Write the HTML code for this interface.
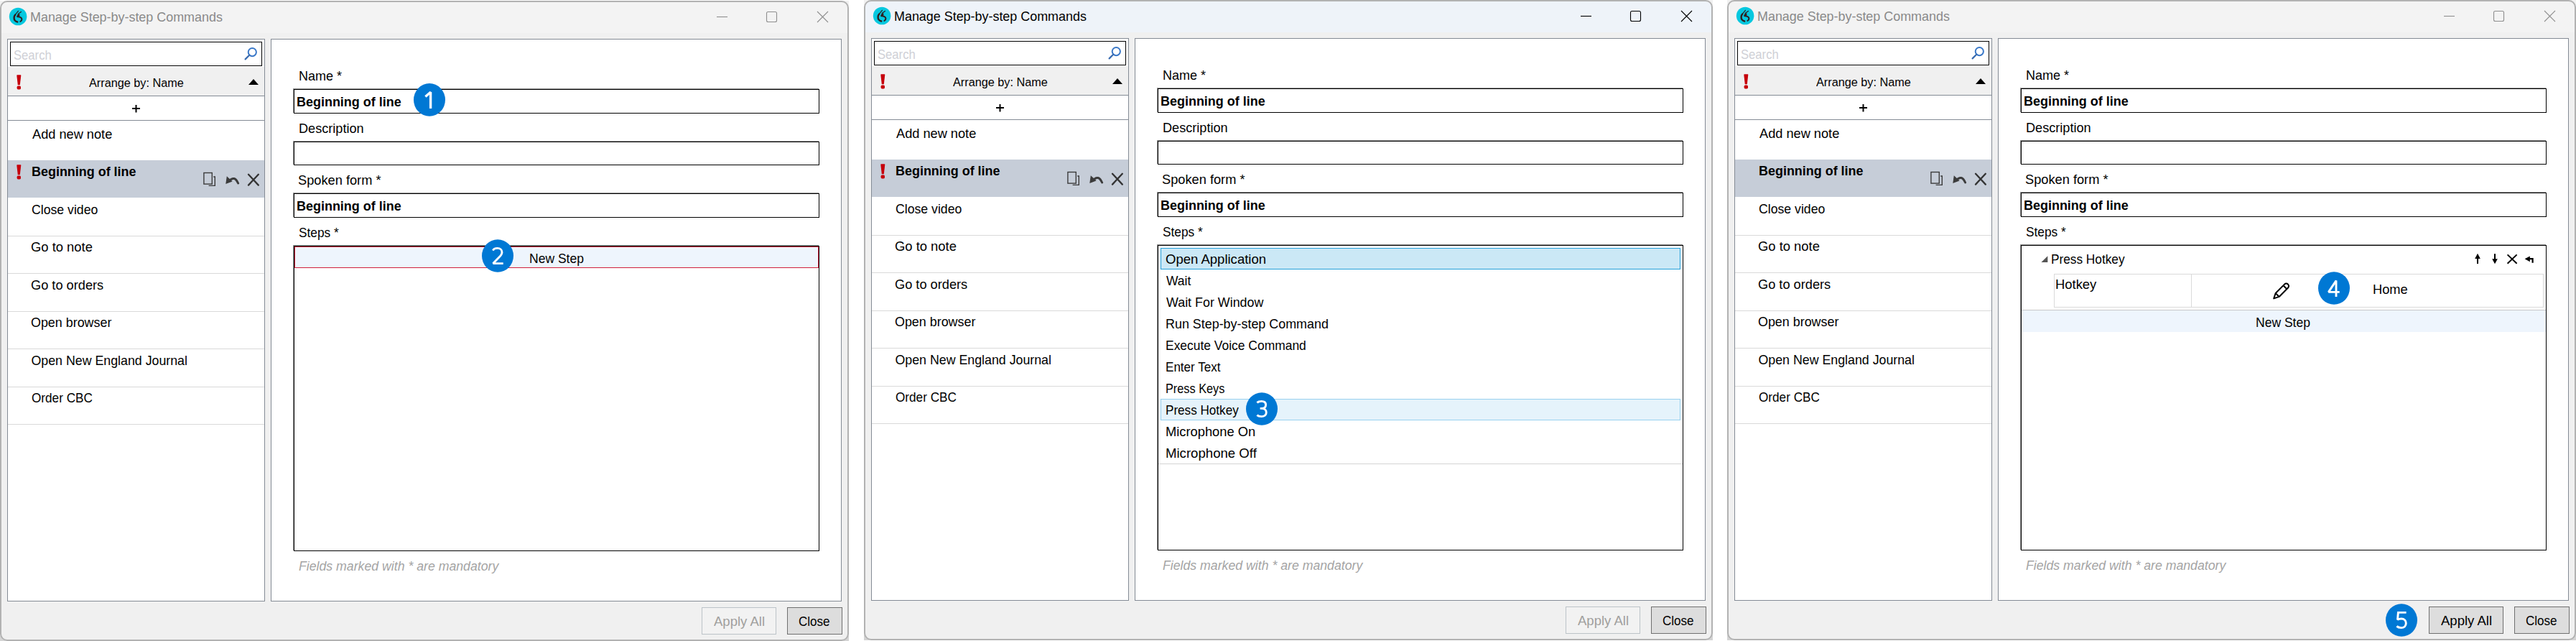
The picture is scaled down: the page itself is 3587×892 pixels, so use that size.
<!DOCTYPE html><html><head><meta charset="utf-8"><style>
html,body{margin:0;padding:0;background:#fff;width:3587px;height:892px;overflow:hidden;position:relative;}
.win{position:absolute;width:1182px;height:891px;}
.wbg{position:absolute;left:0;top:0;width:1182px;height:891px;background:#f0f0f0;border-radius:10px;}
.wb{position:absolute;left:0;top:0;width:1182px;height:891px;box-sizing:border-box;border:2px solid #b2b2b2;border-radius:10px;}
.r{position:absolute;box-sizing:border-box;}
svg.r{overflow:visible;}
.t{position:absolute;white-space:nowrap;font-family:"Liberation Sans",sans-serif;line-height:20px;transform-origin:0 0;}
</style></head><body>
<div class="win" style="left:0px;top:1px;">
<div class="r" style="left:0px;top:880px;width:12px;height:11px;background:#d4d4d4;"></div>
<div class="r" style="left:1170px;top:880px;width:12px;height:11px;background:#d4d4d4;"></div>
<div class="r" style="left:0px;top:0px;width:12px;height:12px;background:#f1f1f1;"></div>
<div class="r" style="left:1170px;top:0px;width:12px;height:12px;background:#f1f1f1;"></div>
<div class="wbg"></div>
<div class="r" style="left:2px;top:2px;width:1178px;height:43px;background:#f3f3f3;border-radius:8px 8px 0 0;"></div>
<svg class="r" style="left:11px;top:8px;" width="28" height="28" viewBox="11 8 28 28"><circle cx="25.1" cy="22" r="12.3" fill="#06c8df"/><path d="M21.2,19.6 C19.3,21.6 19.1,25.2 20.5,27.2 C21.3,28.4 22.7,29.2 24.2,29.5" fill="none" stroke="#2e2020" stroke-width="2.4" stroke-linecap="round"/><path d="M25.4,14.3 L20.6,20.2 M29.4,15.4 L25.4,18.2" fill="none" stroke="#2e2020" stroke-width="1.2" stroke-linecap="round"/><path d="M23.2,22 L25,18 L27.6,18.8 L27,22.2 Z" fill="#2e2020"/><path d="M24.2,22.2 C27.4,22 30.4,23.4 30.4,25.8 C30.4,27.2 29.6,28.4 28.4,28.9" fill="none" stroke="#2e2020" stroke-width="2" stroke-linecap="round"/></svg>
<div class="t" style="left:41.99px;top:13.03px;font-size:17.8px;color:#8a8a8a;font-weight:normal;font-style:normal;transform:scaleX(1.0076);">Manage Step-by-step Commands</div>
<svg class="r" style="left:990px;top:8px;" width="175" height="30" viewBox="990 8 175 30"><line x1="998" y1="22.5" x2="1013" y2="22.5" stroke="#8f8f8f" stroke-width="1.1"/><rect x="1067.5" y="15.5" width="14" height="14" rx="2" fill="none" stroke="#8f8f8f" stroke-width="1.1"/><path d="M1138,15 L1153,30 M1153,15 L1138,30" stroke="#8f8f8f" stroke-width="1.1"/></svg>
<div class="r" style="left:10px;top:53px;width:359px;height:783px;background:#fff;box-shadow:inset 0 0 0 1px #848b95;"></div>
<div class="r" style="left:14px;top:57px;width:351px;height:34px;background:#fff;box-shadow:inset 0 0 0 1px #000;"></div>
<div class="t" style="left:18.66px;top:65.73px;font-size:17.8px;color:#cfd0d6;font-weight:normal;font-style:normal;transform:scaleX(0.9352);">Search</div>
<svg class="r" style="left:336px;top:62px;" width="24" height="24" viewBox="336 62 24 24"><circle cx="351.3" cy="71.6" r="5.6" fill="none" stroke="#3a78c8" stroke-width="2"/><line x1="341.6" y1="81.4" x2="347.2" y2="75.8" stroke="#3a6cb0" stroke-width="2.2" stroke-linecap="round"/></svg>
<div class="r" style="left:11px;top:92px;width:357px;height:40px;background:#f0f0f0;"></div>
<div class="r" style="left:11px;top:132px;width:357px;height:1px;background:#848b95;"></div>
<svg class="r" style="left:20px;top:102px;" width="12" height="22" viewBox="20 102 12 22"><path d="M23.3,104.0 Q23.3,103.3 24,103.3 L28.6,103.3 Q29.3,103.3 29.3,104.0 L27.8,117.2 L24.8,117.2 Z" fill="#c6000c"/><rect x="23.6" y="118.6" width="5.4" height="4.8" rx="1.6" fill="#c6000c"/></svg>
<div class="t" style="left:123.70px;top:104.15px;font-size:16.3px;color:#000;font-weight:normal;font-style:normal;transform:scaleX(0.9977);">Arrange by: Name</div>
<svg class="r" style="left:344px;top:107px;" width="18" height="12" viewBox="344 107 18 12"><path d="M346,117 L353,109 L360,117 Z" fill="#000"/></svg>
<div class="r" style="left:11px;top:166px;width:357px;height:1px;background:#848b95;"></div>
<svg class="r" style="left:182px;top:143px;" width="16" height="16" viewBox="182 143 16 16"><path d="M184,150 L195,150 M189.5,145 L189.5,155.5" stroke="#000" stroke-width="2"/></svg>
<div class="r" style="left:11px;top:222px;width:357px;height:52px;background:#c6cdd8;"></div>
<div class="r" style="left:11px;top:327px;width:357px;height:1px;background:#d9d9d9;"></div>
<div class="r" style="left:11px;top:379px;width:357px;height:1px;background:#d9d9d9;"></div>
<div class="r" style="left:11px;top:432px;width:357px;height:1px;background:#d9d9d9;"></div>
<div class="r" style="left:11px;top:484px;width:357px;height:1px;background:#d9d9d9;"></div>
<div class="r" style="left:11px;top:537px;width:357px;height:1px;background:#d9d9d9;"></div>
<div class="r" style="left:11px;top:589px;width:357px;height:1px;background:#d9d9d9;"></div>
<div class="t" style="left:44.50px;top:175.63px;font-size:17.8px;color:#000;font-weight:normal;font-style:normal;transform:scaleX(1.0231);">Add new note</div>
<div class="t" style="left:43.99px;top:228.43px;font-size:17.8px;color:#000;font-weight:bold;font-style:normal;transform:scaleX(1.0091);">Beginning of line</div>
<div class="t" style="left:43.51px;top:280.93px;font-size:17.8px;color:#000;font-weight:normal;font-style:normal;transform:scaleX(0.9934);">Close video</div>
<div class="t" style="left:43.47px;top:333.43px;font-size:17.8px;color:#000;font-weight:normal;font-style:normal;transform:scaleX(1.0341);">Go to note</div>
<div class="t" style="left:43.48px;top:385.93px;font-size:17.8px;color:#000;font-weight:normal;font-style:normal;transform:scaleX(1.0237);">Go to orders</div>
<div class="t" style="left:43.49px;top:438.43px;font-size:17.8px;color:#000;font-weight:normal;font-style:normal;transform:scaleX(1.0063);">Open browser</div>
<div class="t" style="left:43.50px;top:490.93px;font-size:17.8px;color:#000;font-weight:normal;font-style:normal;">Open New England Journal</div>
<div class="t" style="left:43.53px;top:543.43px;font-size:17.8px;color:#000;font-weight:normal;font-style:normal;transform:scaleX(0.9651);">Order CBC</div>
<svg class="r" style="left:20px;top:227px;" width="12" height="22" viewBox="20 227 12 22"><path d="M23.3,229.0 Q23.3,228.3 24,228.3 L28.6,228.3 Q29.3,228.3 29.3,229.0 L27.8,242.20000000000002 L24.8,242.20000000000002 Z" fill="#c6000c"/><rect x="23.6" y="243.60000000000002" width="5.4" height="4.8" rx="1.6" fill="#c6000c"/></svg>
<svg class="r" style="left:280px;top:236px;" width="90" height="26" viewBox="280 236 90 26"><rect x="283.9" y="239.5" width="11.4" height="15.6" fill="none" stroke="#3c3c3c" stroke-width="1.4"/><path d="M297.2,245 L299.3,245 L299.3,257.4 L290.6,257.4" fill="none" stroke="#3c3c3c" stroke-width="1.4"/><path d="M314.3,255 L315.8,244.2 L323.6,251.4 Z" fill="#3c3c3c"/><path d="M319.2,250.6 Q326.5,242.8 331.6,254" fill="none" stroke="#3c3c3c" stroke-width="3" stroke-linecap="round"/><path d="M346,241.8 L359.8,256.6 M359.8,241.8 L346,256.6" stroke="#333" stroke-width="2.3" stroke-linecap="round"/></svg>
<div class="r" style="left:377px;top:53px;width:795px;height:783px;background:#fff;box-shadow:inset 0 0 0 1px #848b95;"></div>
<div class="t" style="left:416.09px;top:94.83px;font-size:17.8px;color:#000;font-weight:normal;font-style:normal;transform:scaleX(1.0121);">Name *</div>
<div class="r" style="left:409px;top:123px;width:732px;height:34px;box-shadow:inset 0 0 0 1px #000, -1px -1px 0 0 rgba(0,0,0,.42);"></div>
<div class="t" style="left:412.99px;top:130.53px;font-size:17.8px;color:#000;font-weight:bold;font-style:normal;transform:scaleX(1.0098);">Beginning of line</div>
<div class="t" style="left:416.08px;top:167.83px;font-size:17.8px;color:#000;font-weight:normal;font-style:normal;transform:scaleX(1.0184);">Description</div>
<div class="r" style="left:409px;top:196px;width:732px;height:33px;box-shadow:inset 0 0 0 1px #000, -1px -1px 0 0 rgba(0,0,0,.42);"></div>
<div class="t" style="left:415.47px;top:239.83px;font-size:17.8px;color:#000;font-weight:normal;font-style:normal;transform:scaleX(1.0252);">Spoken form *</div>
<div class="r" style="left:409px;top:268px;width:732px;height:34px;box-shadow:inset 0 0 0 1px #000, -1px -1px 0 0 rgba(0,0,0,.42);"></div>
<div class="t" style="left:412.99px;top:275.63px;font-size:17.8px;color:#000;font-weight:bold;font-style:normal;transform:scaleX(1.0098);">Beginning of line</div>
<div class="t" style="left:415.53px;top:313.23px;font-size:17.8px;color:#000;font-weight:normal;font-style:normal;transform:scaleX(0.9714);">Steps *</div>
<div class="r" style="left:409px;top:341px;width:732px;height:425px;box-shadow:inset 0 0 0 1px #000, -1px -1px 0 0 rgba(0,0,0,.42);"></div>
<div class="t" style="left:415.81px;top:776.83px;font-size:17.8px;color:#a4a4a4;font-weight:normal;font-style:italic;transform:scaleX(0.9950);">Fields marked with * are mandatory</div>
<div class="r" style="left:977px;top:844px;width:104px;height:38px;background:#f2f2f2;box-shadow:inset 0 0 0 1px #bcc3c8;"></div>
<div class="t" style="left:994.20px;top:853.83px;font-size:17.8px;color:#a09f9d;font-weight:normal;font-style:normal;transform:scaleX(1.0418);">Apply All</div>
<div class="r" style="left:1096px;top:844px;width:77px;height:38px;background:#dddddd;box-shadow:inset 0 0 0 1px #707070;"></div>
<div class="t" style="left:1112.34px;top:853.83px;font-size:17.8px;color:#000;font-weight:normal;font-style:normal;transform:scaleX(0.9591);">Close</div>
<div class="r" style="left:410px;top:342px;width:730px;height:30px;background:#eef5fd;box-shadow:inset 0 0 0 1px #d01f3c;"></div>
<div class="t" style="left:736.71px;top:348.83px;font-size:17.8px;color:#000;font-weight:normal;font-style:normal;transform:scaleX(0.9855);">New Step</div>
<svg class="r" style="left:574px;top:113px;" width="48" height="49" viewBox="574 113 48 49"><ellipse cx="598" cy="137.9" rx="22.0" ry="22.85" fill="#0078d4"/><path transform="translate(598 137.9)" d="M-5.6,-4.4 L1.6,-10.6 L1.6,12" fill="none" stroke="#fff" stroke-width="3.4" stroke-miterlimit="2"/></svg>
<svg class="r" style="left:669px;top:330px;" width="48" height="49" viewBox="669 330 48 49"><ellipse cx="693" cy="355" rx="22.0" ry="22.85" fill="#0078d4"/><path transform="translate(693 355)" d="M-6.6,-7.4 C-5.6,-9.8 -3.2,-10.6 -0.4,-10.6 C3.6,-10.6 6,-8.2 6,-5 C6,-2.4 4.6,-0.6 2.2,1.8 L-6.4,10.6 L7.7,10.6" fill="none" stroke="#fff" stroke-width="2.9" stroke-miterlimit="2"/></svg>
<div class="wb"></div>
</div>
<div class="win" style="left:1203px;top:0px;">
<div class="r" style="left:0px;top:880px;width:12px;height:11px;background:#d4d4d4;"></div>
<div class="r" style="left:1170px;top:880px;width:12px;height:11px;background:#d4d4d4;"></div>
<div class="r" style="left:0px;top:0px;width:12px;height:12px;background:#f1f1f1;"></div>
<div class="r" style="left:1170px;top:0px;width:12px;height:12px;background:#f1f1f1;"></div>
<div class="wbg"></div>
<div class="r" style="left:2px;top:2px;width:1178px;height:43px;background:#eef3f9;border-radius:8px 8px 0 0;"></div>
<svg class="r" style="left:11px;top:8px;" width="28" height="28" viewBox="11 8 28 28"><circle cx="25.1" cy="22" r="12.3" fill="#06c8df"/><path d="M21.2,19.6 C19.3,21.6 19.1,25.2 20.5,27.2 C21.3,28.4 22.7,29.2 24.2,29.5" fill="none" stroke="#2e2020" stroke-width="2.4" stroke-linecap="round"/><path d="M25.4,14.3 L20.6,20.2 M29.4,15.4 L25.4,18.2" fill="none" stroke="#2e2020" stroke-width="1.2" stroke-linecap="round"/><path d="M23.2,22 L25,18 L27.6,18.8 L27,22.2 Z" fill="#2e2020"/><path d="M24.2,22.2 C27.4,22 30.4,23.4 30.4,25.8 C30.4,27.2 29.6,28.4 28.4,28.9" fill="none" stroke="#2e2020" stroke-width="2" stroke-linecap="round"/></svg>
<div class="t" style="left:41.99px;top:13.03px;font-size:17.8px;color:#000;font-weight:normal;font-style:normal;transform:scaleX(1.0076);">Manage Step-by-step Commands</div>
<svg class="r" style="left:990px;top:8px;" width="175" height="30" viewBox="990 8 175 30"><line x1="998" y1="22.5" x2="1013" y2="22.5" stroke="#000" stroke-width="1.1"/><rect x="1067.5" y="15.5" width="14" height="14" rx="2" fill="none" stroke="#000" stroke-width="1.1"/><path d="M1138,15 L1153,30 M1153,15 L1138,30" stroke="#000" stroke-width="1.1"/></svg>
<div class="r" style="left:10px;top:53px;width:359px;height:783px;background:#fff;box-shadow:inset 0 0 0 1px #848b95;"></div>
<div class="r" style="left:14px;top:57px;width:351px;height:34px;background:#fff;box-shadow:inset 0 0 0 1px #000;"></div>
<div class="t" style="left:18.66px;top:65.73px;font-size:17.8px;color:#cfd0d6;font-weight:normal;font-style:normal;transform:scaleX(0.9352);">Search</div>
<svg class="r" style="left:336px;top:62px;" width="24" height="24" viewBox="336 62 24 24"><circle cx="351.3" cy="71.6" r="5.6" fill="none" stroke="#3a78c8" stroke-width="2"/><line x1="341.6" y1="81.4" x2="347.2" y2="75.8" stroke="#3a6cb0" stroke-width="2.2" stroke-linecap="round"/></svg>
<div class="r" style="left:11px;top:92px;width:357px;height:40px;background:#f0f0f0;"></div>
<div class="r" style="left:11px;top:132px;width:357px;height:1px;background:#848b95;"></div>
<svg class="r" style="left:20px;top:102px;" width="12" height="22" viewBox="20 102 12 22"><path d="M23.3,104.0 Q23.3,103.3 24,103.3 L28.6,103.3 Q29.3,103.3 29.3,104.0 L27.8,117.2 L24.8,117.2 Z" fill="#c6000c"/><rect x="23.6" y="118.6" width="5.4" height="4.8" rx="1.6" fill="#c6000c"/></svg>
<div class="t" style="left:123.70px;top:104.15px;font-size:16.3px;color:#000;font-weight:normal;font-style:normal;transform:scaleX(0.9977);">Arrange by: Name</div>
<svg class="r" style="left:344px;top:107px;" width="18" height="12" viewBox="344 107 18 12"><path d="M346,117 L353,109 L360,117 Z" fill="#000"/></svg>
<div class="r" style="left:11px;top:166px;width:357px;height:1px;background:#848b95;"></div>
<svg class="r" style="left:182px;top:143px;" width="16" height="16" viewBox="182 143 16 16"><path d="M184,150 L195,150 M189.5,145 L189.5,155.5" stroke="#000" stroke-width="2"/></svg>
<div class="r" style="left:11px;top:222px;width:357px;height:52px;background:#c6cdd8;"></div>
<div class="r" style="left:11px;top:327px;width:357px;height:1px;background:#d9d9d9;"></div>
<div class="r" style="left:11px;top:379px;width:357px;height:1px;background:#d9d9d9;"></div>
<div class="r" style="left:11px;top:432px;width:357px;height:1px;background:#d9d9d9;"></div>
<div class="r" style="left:11px;top:484px;width:357px;height:1px;background:#d9d9d9;"></div>
<div class="r" style="left:11px;top:537px;width:357px;height:1px;background:#d9d9d9;"></div>
<div class="r" style="left:11px;top:589px;width:357px;height:1px;background:#d9d9d9;"></div>
<div class="t" style="left:44.50px;top:175.63px;font-size:17.8px;color:#000;font-weight:normal;font-style:normal;transform:scaleX(1.0231);">Add new note</div>
<div class="t" style="left:43.99px;top:228.43px;font-size:17.8px;color:#000;font-weight:bold;font-style:normal;transform:scaleX(1.0091);">Beginning of line</div>
<div class="t" style="left:43.51px;top:280.93px;font-size:17.8px;color:#000;font-weight:normal;font-style:normal;transform:scaleX(0.9934);">Close video</div>
<div class="t" style="left:43.47px;top:333.43px;font-size:17.8px;color:#000;font-weight:normal;font-style:normal;transform:scaleX(1.0341);">Go to note</div>
<div class="t" style="left:43.48px;top:385.93px;font-size:17.8px;color:#000;font-weight:normal;font-style:normal;transform:scaleX(1.0237);">Go to orders</div>
<div class="t" style="left:43.49px;top:438.43px;font-size:17.8px;color:#000;font-weight:normal;font-style:normal;transform:scaleX(1.0063);">Open browser</div>
<div class="t" style="left:43.50px;top:490.93px;font-size:17.8px;color:#000;font-weight:normal;font-style:normal;">Open New England Journal</div>
<div class="t" style="left:43.53px;top:543.43px;font-size:17.8px;color:#000;font-weight:normal;font-style:normal;transform:scaleX(0.9651);">Order CBC</div>
<svg class="r" style="left:20px;top:227px;" width="12" height="22" viewBox="20 227 12 22"><path d="M23.3,229.0 Q23.3,228.3 24,228.3 L28.6,228.3 Q29.3,228.3 29.3,229.0 L27.8,242.20000000000002 L24.8,242.20000000000002 Z" fill="#c6000c"/><rect x="23.6" y="243.60000000000002" width="5.4" height="4.8" rx="1.6" fill="#c6000c"/></svg>
<svg class="r" style="left:280px;top:236px;" width="90" height="26" viewBox="280 236 90 26"><rect x="283.9" y="239.5" width="11.4" height="15.6" fill="none" stroke="#3c3c3c" stroke-width="1.4"/><path d="M297.2,245 L299.3,245 L299.3,257.4 L290.6,257.4" fill="none" stroke="#3c3c3c" stroke-width="1.4"/><path d="M314.3,255 L315.8,244.2 L323.6,251.4 Z" fill="#3c3c3c"/><path d="M319.2,250.6 Q326.5,242.8 331.6,254" fill="none" stroke="#3c3c3c" stroke-width="3" stroke-linecap="round"/><path d="M346,241.8 L359.8,256.6 M359.8,241.8 L346,256.6" stroke="#333" stroke-width="2.3" stroke-linecap="round"/></svg>
<div class="r" style="left:377px;top:53px;width:795px;height:783px;background:#fff;box-shadow:inset 0 0 0 1px #848b95;"></div>
<div class="t" style="left:416.09px;top:94.83px;font-size:17.8px;color:#000;font-weight:normal;font-style:normal;transform:scaleX(1.0121);">Name *</div>
<div class="r" style="left:409px;top:123px;width:732px;height:34px;box-shadow:inset 0 0 0 1px #000, -1px -1px 0 0 rgba(0,0,0,.42);"></div>
<div class="t" style="left:412.99px;top:130.53px;font-size:17.8px;color:#000;font-weight:bold;font-style:normal;transform:scaleX(1.0098);">Beginning of line</div>
<div class="t" style="left:416.08px;top:167.83px;font-size:17.8px;color:#000;font-weight:normal;font-style:normal;transform:scaleX(1.0184);">Description</div>
<div class="r" style="left:409px;top:196px;width:732px;height:33px;box-shadow:inset 0 0 0 1px #000, -1px -1px 0 0 rgba(0,0,0,.42);"></div>
<div class="t" style="left:415.47px;top:239.83px;font-size:17.8px;color:#000;font-weight:normal;font-style:normal;transform:scaleX(1.0252);">Spoken form *</div>
<div class="r" style="left:409px;top:268px;width:732px;height:34px;box-shadow:inset 0 0 0 1px #000, -1px -1px 0 0 rgba(0,0,0,.42);"></div>
<div class="t" style="left:412.99px;top:275.63px;font-size:17.8px;color:#000;font-weight:bold;font-style:normal;transform:scaleX(1.0098);">Beginning of line</div>
<div class="t" style="left:415.53px;top:313.23px;font-size:17.8px;color:#000;font-weight:normal;font-style:normal;transform:scaleX(0.9714);">Steps *</div>
<div class="r" style="left:409px;top:341px;width:732px;height:425px;box-shadow:inset 0 0 0 1px #000, -1px -1px 0 0 rgba(0,0,0,.42);"></div>
<div class="t" style="left:415.81px;top:776.83px;font-size:17.8px;color:#a4a4a4;font-weight:normal;font-style:italic;transform:scaleX(0.9950);">Fields marked with * are mandatory</div>
<div class="r" style="left:977px;top:844px;width:104px;height:38px;background:#f2f2f2;box-shadow:inset 0 0 0 1px #bcc3c8;"></div>
<div class="t" style="left:994.20px;top:853.83px;font-size:17.8px;color:#a09f9d;font-weight:normal;font-style:normal;transform:scaleX(1.0418);">Apply All</div>
<div class="r" style="left:1096px;top:844px;width:77px;height:38px;background:#dddddd;box-shadow:inset 0 0 0 1px #707070;"></div>
<div class="t" style="left:1112.34px;top:853.83px;font-size:17.8px;color:#000;font-weight:normal;font-style:normal;transform:scaleX(0.9591);">Close</div>
<div class="r" style="left:413px;top:345px;width:724px;height:30px;background:#cbe8f6;box-shadow:inset 0 0 0 1px #26a0da;"></div>
<div class="r" style="left:413px;top:555px;width:724px;height:30px;background:#e5f3fb;box-shadow:inset 0 0 0 1px #99d1ef;"></div>
<div class="t" style="left:420.26px;top:350.63px;font-size:17.8px;color:#000;font-weight:normal;font-style:normal;transform:scaleX(1.0417);">Open Application</div>
<div class="t" style="left:421.30px;top:380.63px;font-size:17.8px;color:#000;font-weight:normal;font-style:normal;transform:scaleX(0.9829);">Wait</div>
<div class="t" style="left:421.30px;top:410.63px;font-size:17.8px;color:#000;font-weight:normal;font-style:normal;transform:scaleX(1.0052);">Wait For Window</div>
<div class="t" style="left:420.29px;top:440.63px;font-size:17.8px;color:#000;font-weight:normal;font-style:normal;transform:scaleX(1.0067);">Run Step-by-step Command</div>
<div class="t" style="left:420.32px;top:470.63px;font-size:17.8px;color:#000;font-weight:normal;font-style:normal;transform:scaleX(0.9808);">Execute Voice Command</div>
<div class="t" style="left:420.34px;top:500.63px;font-size:17.8px;color:#000;font-weight:normal;font-style:normal;transform:scaleX(0.9595);">Enter Text</div>
<div class="t" style="left:420.38px;top:530.63px;font-size:17.8px;color:#000;font-weight:normal;font-style:normal;transform:scaleX(0.9159);">Press Keys</div>
<div class="t" style="left:420.34px;top:560.63px;font-size:17.8px;color:#000;font-weight:normal;font-style:normal;transform:scaleX(0.9619);">Press Hotkey</div>
<div class="t" style="left:420.27px;top:590.63px;font-size:17.8px;color:#000;font-weight:normal;font-style:normal;transform:scaleX(1.0292);">Microphone On</div>
<div class="t" style="left:420.25px;top:620.63px;font-size:17.8px;color:#000;font-weight:normal;font-style:normal;transform:scaleX(1.0458);">Microphone Off</div>
<div class="r" style="left:410px;top:645px;width:730px;height:1px;background:#d4d4d4;"></div>
<svg class="r" style="left:530px;top:544px;" width="48" height="49" viewBox="530 544 48 49"><ellipse cx="554" cy="569" rx="22.0" ry="22.85" fill="#0078d4"/><path transform="translate(554 569)" d="M-6.6,-8.6 C-5.2,-10 -3,-10.6 -0.4,-10.6 C3.4,-10.6 5.6,-8.6 5.6,-5.6 C5.6,-2.4 3.2,-0.6 -0.6,-0.6 L-2.4,-0.6 M-0.6,-0.6 C3.8,-0.6 6.3,1.6 6.3,5 C6.3,8.6 3.4,10.6 -0.4,10.6 C-3,10.6 -5.2,10 -6.6,8.6" fill="none" stroke="#fff" stroke-width="2.9" stroke-miterlimit="2"/></svg>
<div class="wb"></div>
</div>
<div class="win" style="left:2405px;top:0px;">
<div class="r" style="left:0px;top:880px;width:12px;height:11px;background:#d4d4d4;"></div>
<div class="r" style="left:1170px;top:880px;width:12px;height:11px;background:#d4d4d4;"></div>
<div class="r" style="left:0px;top:0px;width:12px;height:12px;background:#f1f1f1;"></div>
<div class="r" style="left:1170px;top:0px;width:12px;height:12px;background:#f1f1f1;"></div>
<div class="wbg"></div>
<div class="r" style="left:2px;top:2px;width:1178px;height:43px;background:#f3f3f3;border-radius:8px 8px 0 0;"></div>
<svg class="r" style="left:11px;top:8px;" width="28" height="28" viewBox="11 8 28 28"><circle cx="25.1" cy="22" r="12.3" fill="#06c8df"/><path d="M21.2,19.6 C19.3,21.6 19.1,25.2 20.5,27.2 C21.3,28.4 22.7,29.2 24.2,29.5" fill="none" stroke="#2e2020" stroke-width="2.4" stroke-linecap="round"/><path d="M25.4,14.3 L20.6,20.2 M29.4,15.4 L25.4,18.2" fill="none" stroke="#2e2020" stroke-width="1.2" stroke-linecap="round"/><path d="M23.2,22 L25,18 L27.6,18.8 L27,22.2 Z" fill="#2e2020"/><path d="M24.2,22.2 C27.4,22 30.4,23.4 30.4,25.8 C30.4,27.2 29.6,28.4 28.4,28.9" fill="none" stroke="#2e2020" stroke-width="2" stroke-linecap="round"/></svg>
<div class="t" style="left:41.99px;top:13.03px;font-size:17.8px;color:#8a8a8a;font-weight:normal;font-style:normal;transform:scaleX(1.0076);">Manage Step-by-step Commands</div>
<svg class="r" style="left:990px;top:8px;" width="175" height="30" viewBox="990 8 175 30"><line x1="998" y1="22.5" x2="1013" y2="22.5" stroke="#8f8f8f" stroke-width="1.1"/><rect x="1067.5" y="15.5" width="14" height="14" rx="2" fill="none" stroke="#8f8f8f" stroke-width="1.1"/><path d="M1138,15 L1153,30 M1153,15 L1138,30" stroke="#8f8f8f" stroke-width="1.1"/></svg>
<div class="r" style="left:10px;top:53px;width:359px;height:783px;background:#fff;box-shadow:inset 0 0 0 1px #848b95;"></div>
<div class="r" style="left:14px;top:57px;width:351px;height:34px;background:#fff;box-shadow:inset 0 0 0 1px #000;"></div>
<div class="t" style="left:18.66px;top:65.73px;font-size:17.8px;color:#cfd0d6;font-weight:normal;font-style:normal;transform:scaleX(0.9352);">Search</div>
<svg class="r" style="left:336px;top:62px;" width="24" height="24" viewBox="336 62 24 24"><circle cx="351.3" cy="71.6" r="5.6" fill="none" stroke="#3a78c8" stroke-width="2"/><line x1="341.6" y1="81.4" x2="347.2" y2="75.8" stroke="#3a6cb0" stroke-width="2.2" stroke-linecap="round"/></svg>
<div class="r" style="left:11px;top:92px;width:357px;height:40px;background:#f0f0f0;"></div>
<div class="r" style="left:11px;top:132px;width:357px;height:1px;background:#848b95;"></div>
<svg class="r" style="left:20px;top:102px;" width="12" height="22" viewBox="20 102 12 22"><path d="M23.3,104.0 Q23.3,103.3 24,103.3 L28.6,103.3 Q29.3,103.3 29.3,104.0 L27.8,117.2 L24.8,117.2 Z" fill="#c6000c"/><rect x="23.6" y="118.6" width="5.4" height="4.8" rx="1.6" fill="#c6000c"/></svg>
<div class="t" style="left:123.70px;top:104.15px;font-size:16.3px;color:#000;font-weight:normal;font-style:normal;transform:scaleX(0.9977);">Arrange by: Name</div>
<svg class="r" style="left:344px;top:107px;" width="18" height="12" viewBox="344 107 18 12"><path d="M346,117 L353,109 L360,117 Z" fill="#000"/></svg>
<div class="r" style="left:11px;top:166px;width:357px;height:1px;background:#848b95;"></div>
<svg class="r" style="left:182px;top:143px;" width="16" height="16" viewBox="182 143 16 16"><path d="M184,150 L195,150 M189.5,145 L189.5,155.5" stroke="#000" stroke-width="2"/></svg>
<div class="r" style="left:11px;top:222px;width:357px;height:52px;background:#c6cdd8;"></div>
<div class="r" style="left:11px;top:327px;width:357px;height:1px;background:#d9d9d9;"></div>
<div class="r" style="left:11px;top:379px;width:357px;height:1px;background:#d9d9d9;"></div>
<div class="r" style="left:11px;top:432px;width:357px;height:1px;background:#d9d9d9;"></div>
<div class="r" style="left:11px;top:484px;width:357px;height:1px;background:#d9d9d9;"></div>
<div class="r" style="left:11px;top:537px;width:357px;height:1px;background:#d9d9d9;"></div>
<div class="r" style="left:11px;top:589px;width:357px;height:1px;background:#d9d9d9;"></div>
<div class="t" style="left:44.50px;top:175.63px;font-size:17.8px;color:#000;font-weight:normal;font-style:normal;transform:scaleX(1.0231);">Add new note</div>
<div class="t" style="left:43.99px;top:228.43px;font-size:17.8px;color:#000;font-weight:bold;font-style:normal;transform:scaleX(1.0091);">Beginning of line</div>
<div class="t" style="left:43.51px;top:280.93px;font-size:17.8px;color:#000;font-weight:normal;font-style:normal;transform:scaleX(0.9934);">Close video</div>
<div class="t" style="left:43.47px;top:333.43px;font-size:17.8px;color:#000;font-weight:normal;font-style:normal;transform:scaleX(1.0341);">Go to note</div>
<div class="t" style="left:43.48px;top:385.93px;font-size:17.8px;color:#000;font-weight:normal;font-style:normal;transform:scaleX(1.0237);">Go to orders</div>
<div class="t" style="left:43.49px;top:438.43px;font-size:17.8px;color:#000;font-weight:normal;font-style:normal;transform:scaleX(1.0063);">Open browser</div>
<div class="t" style="left:43.50px;top:490.93px;font-size:17.8px;color:#000;font-weight:normal;font-style:normal;">Open New England Journal</div>
<div class="t" style="left:43.53px;top:543.43px;font-size:17.8px;color:#000;font-weight:normal;font-style:normal;transform:scaleX(0.9651);">Order CBC</div>
<svg class="r" style="left:280px;top:236px;" width="90" height="26" viewBox="280 236 90 26"><rect x="283.9" y="239.5" width="11.4" height="15.6" fill="none" stroke="#3c3c3c" stroke-width="1.4"/><path d="M297.2,245 L299.3,245 L299.3,257.4 L290.6,257.4" fill="none" stroke="#3c3c3c" stroke-width="1.4"/><path d="M314.3,255 L315.8,244.2 L323.6,251.4 Z" fill="#3c3c3c"/><path d="M319.2,250.6 Q326.5,242.8 331.6,254" fill="none" stroke="#3c3c3c" stroke-width="3" stroke-linecap="round"/><path d="M346,241.8 L359.8,256.6 M359.8,241.8 L346,256.6" stroke="#333" stroke-width="2.3" stroke-linecap="round"/></svg>
<div class="r" style="left:377px;top:53px;width:795px;height:783px;background:#fff;box-shadow:inset 0 0 0 1px #848b95;"></div>
<div class="t" style="left:416.09px;top:94.83px;font-size:17.8px;color:#000;font-weight:normal;font-style:normal;transform:scaleX(1.0121);">Name *</div>
<div class="r" style="left:409px;top:123px;width:732px;height:34px;box-shadow:inset 0 0 0 1px #000, -1px -1px 0 0 rgba(0,0,0,.42);"></div>
<div class="t" style="left:412.99px;top:130.53px;font-size:17.8px;color:#000;font-weight:bold;font-style:normal;transform:scaleX(1.0098);">Beginning of line</div>
<div class="t" style="left:416.08px;top:167.83px;font-size:17.8px;color:#000;font-weight:normal;font-style:normal;transform:scaleX(1.0184);">Description</div>
<div class="r" style="left:409px;top:196px;width:732px;height:33px;box-shadow:inset 0 0 0 1px #000, -1px -1px 0 0 rgba(0,0,0,.42);"></div>
<div class="t" style="left:415.47px;top:239.83px;font-size:17.8px;color:#000;font-weight:normal;font-style:normal;transform:scaleX(1.0252);">Spoken form *</div>
<div class="r" style="left:409px;top:268px;width:732px;height:34px;box-shadow:inset 0 0 0 1px #000, -1px -1px 0 0 rgba(0,0,0,.42);"></div>
<div class="t" style="left:412.99px;top:275.63px;font-size:17.8px;color:#000;font-weight:bold;font-style:normal;transform:scaleX(1.0098);">Beginning of line</div>
<div class="t" style="left:415.53px;top:313.23px;font-size:17.8px;color:#000;font-weight:normal;font-style:normal;transform:scaleX(0.9714);">Steps *</div>
<div class="r" style="left:409px;top:341px;width:732px;height:425px;box-shadow:inset 0 0 0 1px #000, -1px -1px 0 0 rgba(0,0,0,.42);"></div>
<div class="t" style="left:415.81px;top:776.83px;font-size:17.8px;color:#a4a4a4;font-weight:normal;font-style:italic;transform:scaleX(0.9950);">Fields marked with * are mandatory</div>
<div class="r" style="left:977px;top:844px;width:104px;height:38px;background:#dddddd;box-shadow:inset 0 0 0 1px #707070;"></div>
<div class="t" style="left:994.20px;top:853.83px;font-size:17.8px;color:#000;font-weight:normal;font-style:normal;transform:scaleX(1.0418);">Apply All</div>
<div class="r" style="left:1096px;top:844px;width:77px;height:38px;background:#dddddd;box-shadow:inset 0 0 0 1px #707070;"></div>
<div class="t" style="left:1112.34px;top:853.83px;font-size:17.8px;color:#000;font-weight:normal;font-style:normal;transform:scaleX(0.9591);">Close</div>
<svg class="r" style="left:436px;top:354px;" width="18" height="14" viewBox="436 354 18 14"><path d="M437.4,365 L446.3,365 L446.3,356.2 Z" fill="#555"/></svg>
<div class="t" style="left:451.33px;top:351.23px;font-size:17.8px;color:#000;font-weight:normal;font-style:normal;transform:scaleX(0.9695);">Press Hotkey</div>
<div class="r" style="left:455px;top:381px;width:682px;height:47px;background:#fff;box-shadow:inset 0 0 0 1px #dadada;"></div>
<div class="r" style="left:646px;top:381px;width:1px;height:47px;background:#dadada;"></div>
<div class="t" style="left:456.66px;top:386.33px;font-size:17.8px;color:#000;font-weight:normal;font-style:normal;transform:scaleX(1.0352);">Hotkey</div>
<div class="t" style="left:898.57px;top:392.93px;font-size:17.8px;color:#000;font-weight:normal;font-style:normal;transform:scaleX(1.0283);">Home</div>
<div class="r" style="left:410px;top:431px;width:730px;height:1px;background:#c8c8c8;"></div>
<div class="r" style="left:410px;top:432px;width:730px;height:30px;background:#eef5fd;"></div>
<div class="t" style="left:736.41px;top:438.53px;font-size:17.8px;color:#000;font-weight:normal;font-style:normal;transform:scaleX(0.9855);">New Step</div>
<svg class="r" style="left:752px;top:385px;" width="40" height="40" viewBox="752 385 40 40"><g transform="translate(761.2 415.4) rotate(-45)"><path d="M0,0 L7,-3.5 L24.5,-3.5 A3.5,3.5 0 0 1 24.5,3.5 L7,3.5 Z M7,-3.5 L7,3.5 M22.2,-3.5 L22.2,3.5" fill="none" stroke="#000" stroke-width="2" stroke-linejoin="round"/></g></svg>
<svg class="r" style="left:1040px;top:350px;" width="90" height="20" viewBox="1040 350 90 20"><path d="M1045,352.8 L1041.2,360 L1048.8,360 Z" fill="#000"/><rect x="1044" y="359" width="2" height="8" fill="#000"/><path d="M1069,367.2 L1065.2,360.2 L1072.8,360.2 Z" fill="#000"/><rect x="1068" y="353.2" width="2" height="8" fill="#000"/><path d="M1086.6,354.4 L1099.6,366.8 M1099.6,354.4 L1086.6,366.8" stroke="#000" stroke-width="2"/><path d="M1110.6,360.2 L1117.8,356.5 L1117.8,364.2 Z" fill="#000"/><path d="M1117,360.2 L1121.6,360.2 L1121.6,365.8" fill="none" stroke="#000" stroke-width="2.2"/></svg>
<svg class="r" style="left:821px;top:376px;" width="48" height="49" viewBox="821 376 48 49"><ellipse cx="845" cy="401" rx="22.0" ry="22.85" fill="#0078d4"/><path transform="translate(845 401)" d="M3,12 L3,-10.4 L-7.6,5.4 L7.7,5.4" fill="none" stroke="#fff" stroke-width="2.9" stroke-miterlimit="2"/></svg>
<svg class="r" style="left:915px;top:838px;" width="48" height="49" viewBox="915 838 48 49"><ellipse cx="939" cy="863" rx="22.0" ry="22.85" fill="#0078d4"/><path transform="translate(939 863)" d="M6.6,-10.6 L-4.6,-10.6 L-5.5,-0.6 C-4,-1.6 -2.2,-2 -0.2,-2 C3.8,-2 6.3,0.6 6.3,4.2 C6.3,8.2 3.6,10.6 -0.4,10.6 C-3,10.6 -5.2,9.8 -6.6,8.4" fill="none" stroke="#fff" stroke-width="2.9" stroke-miterlimit="2"/></svg>
<div class="wb"></div>
</div>
</body></html>
